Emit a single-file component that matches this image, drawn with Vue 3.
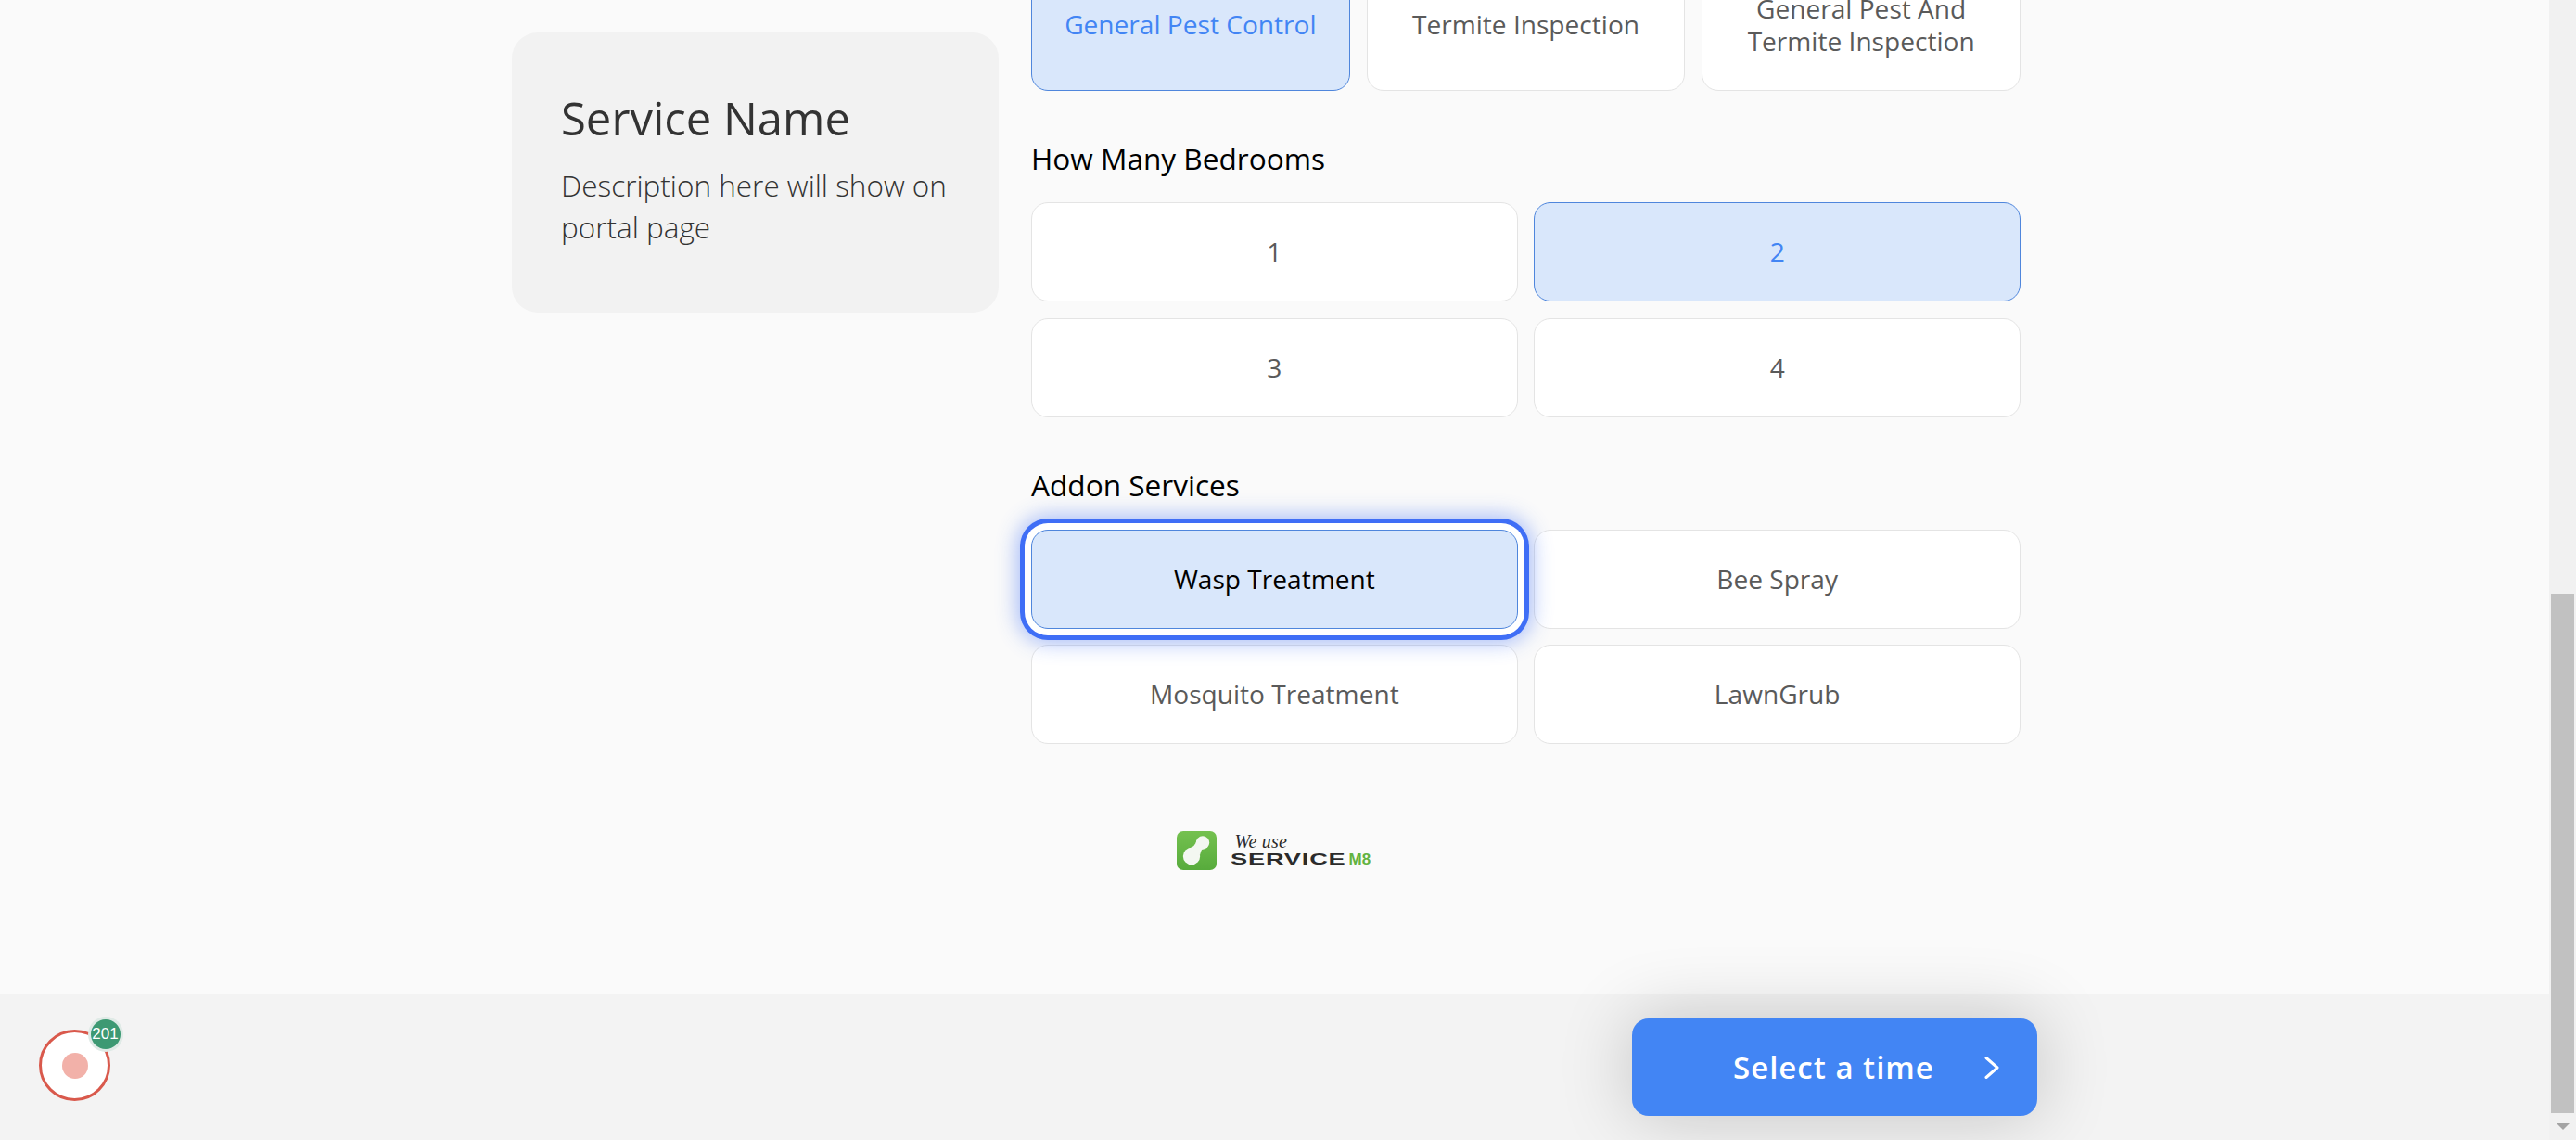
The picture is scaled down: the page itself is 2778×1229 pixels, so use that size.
<script setup>
const services = [
  { label: 'General Pest Control', selected: true },
  { label: 'Termite Inspection' },
  { label: 'General Pest And Termite Inspection' },
]
const bedrooms = [
  { label: '1' },
  { label: '2', selected: true },
  { label: '3' },
  { label: '4' },
]
const addons = [
  { label: 'Wasp Treatment', focused: true },
  { label: 'Bee Spray' },
  { label: 'Mosquito Treatment' },
  { label: 'LawnGrub' },
]
</script>

<template>
  <div class="window">
    <div class="viewport">
      <main class="scroll-area">
        <div class="columns">
          <aside class="service-card">
            <h1>Service Name</h1>
            <p>Description here will show on portal page</p>
          </aside>
          <section class="options">
            <div class="grid three">
              <button
                v-for="item in services"
                :key="item.label"
                class="option tall"
                :class="{ selected: item.selected }"
              >
                <span>{{ item.label }}</span>
              </button>
            </div>
            <h2>How Many Bedrooms</h2>
            <div class="grid two">
              <button
                v-for="item in bedrooms"
                :key="item.label"
                class="option"
                :class="{ selected: item.selected }"
              >
                {{ item.label }}
              </button>
            </div>
            <h2 class="addon-title">Addon Services</h2>
            <div class="grid two addons">
              <button
                v-for="item in addons"
                :key="item.label"
                class="option"
                :class="{ focused: item.focused }"
              >
                {{ item.label }}
              </button>
            </div>
          </section>
        </div>
        <div class="brand">
          <svg class="brand-icon" viewBox="0 0 43 42" aria-hidden="true">
            <defs>
              <linearGradient id="sm8" x1="0" y1="0" x2="0" y2="1">
                <stop offset="0" stop-color="#74c14f" />
                <stop offset="1" stop-color="#57ab3c" />
              </linearGradient>
            </defs>
            <rect width="43" height="42" rx="7" fill="url(#sm8)" />
            <circle cx="16" cy="27" r="9.2" fill="#f3f7f1" />
            <circle cx="28" cy="12.5" r="7.2" fill="#f3f7f1" />
            <path d="M13 18.5 Q20 17 21.5 10 L34 16 Q26 18 25 26 Z" fill="#f3f7f1" />
          </svg>
          <div class="brand-text">
            <span class="we-use">We use</span>
            <span class="wordmark"><span class="service">SERVICE</span><span class="m8">M8</span></span>
          </div>
        </div>
      </main>
      <footer class="footer">
        <div class="widget">
          <span class="dot"></span>
          <span class="badge">201</span>
        </div>
        <button class="next">
          <span>Select a time</span>
          <svg class="chevron" viewBox="0 0 16 24" aria-hidden="true">
            <path d="M2 1.5 L14 12 L2 22.5" />
          </svg>
        </button>
      </footer>
    </div>
    <div class="scrollbar">
      <div class="track"><div class="thumb"></div></div>
      <div class="arrow"></div>
    </div>
  </div>
</template>

<style>
html, body { margin: 0; height: 100%; overflow: hidden; }
</style>

<style scoped>
.window {
  display: flex;
  width: 2778px;
  height: 1229px;
  overflow: hidden;
  background: #fafafa;
  font-family: "Open Sans", sans-serif;
}
.viewport {
  flex: 1;
  min-width: 0;
  display: flex;
  flex-direction: column;
}
.scroll-area {
  flex: 1;
  min-height: 0;
  overflow: hidden;
}
.columns {
  display: flex;
  gap: 35px;
  align-items: flex-start;
  margin: -43px 0 0 552px;
}
.service-card {
  width: 525px;
  box-sizing: border-box;
  margin-top: 78px;
  padding: 58px 40px 70px 53px;
  background: #f2f2f2;
  border-radius: 28px;
  color: #333;
}
.service-card h1 {
  margin: 0 0 16px;
  font-size: 49px;
  line-height: 68px;
  font-weight: 400;
}
.service-card p {
  margin: 0;
  font-size: 31.5px;
  line-height: 45px;
  font-weight: 300;
}
.options { width: 1067px; }
.options h2 {
  margin: 52px 0 25.5px;
  font-size: 31.6px;
  line-height: 42px;
  font-weight: 400;
  color: #000;
}
.options h2.addon-title { margin: 52px 0 27px; }
.grid { display: grid; }
.grid.three { grid-template-columns: repeat(3, 1fr); gap: 18px; }
.grid.two { grid-template-columns: repeat(2, 1fr); gap: 18px 17.7px; }
.grid.two.addons { row-gap: 17px; }
.option {
  position: relative;
  height: 107px;
  padding: 0 30px;
  box-sizing: border-box;
  background: #fff;
  border: 1.5px solid #e4e4e4;
  border-radius: 18px;
  color: #5a5a5a;
  font: 400 28.1px/35px "Open Sans", sans-serif;
}
.option.tall { height: 141px; padding-bottom: 2px; }
.option.selected {
  background: #d9e7fb;
  border-color: #4f86dc;
  color: #4285f4;
}
.option.focused {
  z-index: 1;
  background: #d9e7fb;
  border-color: #4f86dc;
  color: #000;
  box-shadow:
    0 0 0 7px #fff,
    0 0 0 12px #3f6ef6,
    0 0 22px 15px rgba(63, 110, 246, 0.45);
}
.brand {
  display: flex;
  justify-content: center;
  gap: 17px;
  margin-top: 94px;
}
.brand-icon { width: 43px; height: 42px; }
.brand-text {
  display: flex;
  flex-direction: column;
  width: 152px;
  color: #2a2a2a;
}
.we-use {
  margin-left: 3px;
  font: italic 400 20px/22px "Liberation Serif", serif;
  letter-spacing: 0.2px;
}
.wordmark {
  display: flex;
  align-items: baseline;
  font: 700 17px/18px "Liberation Sans", sans-serif;
}
.service {
  display: inline-block;
  width: 128px;
  margin-left: -2px;
  transform: scaleX(1.6);
  transform-origin: left center;
  letter-spacing: 0.5px;
  color: #2b2b2b;
}
.m8 { color: #62b340; }
.footer {
  flex: none;
  height: 157px;
  display: flex;
  align-items: flex-start;
  justify-content: space-between;
  background: #f3f3f3;
  padding: 26px 552px 0 42px;
  box-sizing: border-box;
}
.widget {
  position: relative;
  width: 77px;
  height: 77px;
  margin-top: 12px;
  box-sizing: border-box;
  border: 3.5px solid #d9594c;
  border-radius: 50%;
  background: #fff;
  display: flex;
  align-items: center;
  justify-content: center;
}
.dot {
  width: 28px;
  height: 28px;
  border-radius: 50%;
  background: #f2b1a9;
}
.badge {
  position: absolute;
  left: 52.5px;
  top: -14.5px;
  width: 32px;
  height: 32px;
  border-radius: 50%;
  background: #3d9973;
  box-shadow: 0 0 0 3px #dfeae6;
  color: #fff;
  font: 400 17px/32px "Liberation Sans", sans-serif;
  text-align: center;
}
.next {
  position: relative;
  width: 437px;
  height: 105px;
  padding: 0 41px 0 109px;
  box-sizing: border-box;
  border: 0;
  border-radius: 18px;
  background: #4285f4;
  color: #fff;
  display: flex;
  align-items: center;
  justify-content: space-between;
  font: 600 33px/44px "Open Sans", sans-serif;
  letter-spacing: 1px;
  box-shadow: 0 0 80px rgba(0, 0, 0, 0.2);
}
.chevron {
  width: 16px;
  height: 24px;
  fill: none;
  stroke: #fff;
  stroke-width: 3;
  stroke-linecap: round;
  stroke-linejoin: round;
}
.scrollbar {
  flex: none;
  width: 29px;
  background: #f1f1f1;
  display: flex;
  flex-direction: column;
}
.track { flex: 1; padding-top: 640px; }
.thumb {
  width: 25px;
  height: 560px;
  margin-left: 2px;
  background: #c1c1c1;
}
.arrow {
  flex: none;
  align-self: center;
  width: 0;
  height: 0;
  margin-bottom: 11px;
  border-left: 7px solid transparent;
  border-right: 7px solid transparent;
  border-top: 7px solid #a3a3a3;
}
</style>
